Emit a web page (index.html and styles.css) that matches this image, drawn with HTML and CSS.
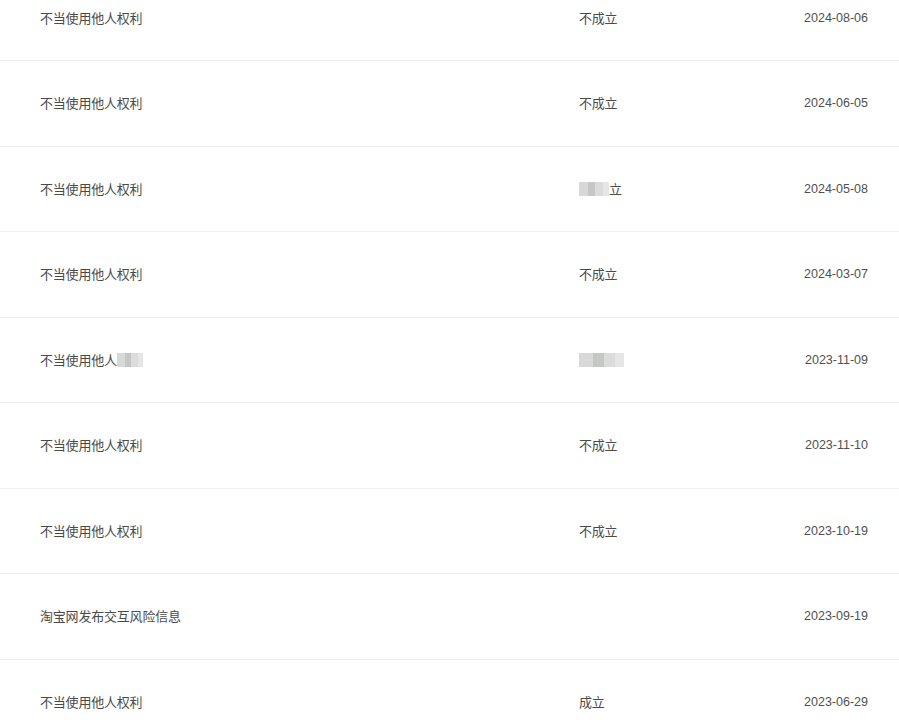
FILE: index.html
```html
<!DOCTYPE html>
<html lang="zh-CN">
<head>
<meta charset="utf-8">
<title>记录列表</title>
<link rel="stylesheet" href="styles.css">
</head>
<body>
<div class="list">
  <div class="row"><span class="type">不当使用他人权利</span><span class="result">不成立</span><span class="date">2024-08-06</span></div>
  <div class="row"><span class="type">不当使用他人权利</span><span class="result">不成立</span><span class="date">2024-06-05</span></div>
  <div class="row"><span class="type">不当使用他人权利</span><span class="result"><i class="mosaic m2"></i>立</span><span class="date">2024-05-08</span></div>
  <div class="row"><span class="type">不当使用他人权利</span><span class="result">不成立</span><span class="date">2024-03-07</span></div>
  <div class="row"><span class="type">不当使用他人<i class="mosaic m1"></i></span><span class="result"><i class="mosaic m3"></i></span><span class="date">2023-11-09</span></div>
  <div class="row"><span class="type">不当使用他人权利</span><span class="result">不成立</span><span class="date">2023-11-10</span></div>
  <div class="row"><span class="type">不当使用他人权利</span><span class="result">不成立</span><span class="date">2023-10-19</span></div>
  <div class="row"><span class="type">淘宝网发布交互风险信息</span><span class="result"></span><span class="date">2023-09-19</span></div>
  <div class="row"><span class="type">不当使用他人权利</span><span class="result">成立</span><span class="date">2023-06-29</span></div>
</div>
</body>
</html>
```
FILE: styles.css
```css
html, body {
  margin: 0;
  padding: 0;
  background: #ffffff;
}
body {
  overflow: hidden;
  font-family: "Noto Sans CJK SC", "Liberation Sans", sans-serif;
  font-size: 13px;
  color: #4a4a4a;
}
.list {
  margin-top: -24.5px;
}
.row {
  display: grid;
  grid-template-columns: 539px 1fr auto;
  align-items: center;
  height: 85.5px;
  box-sizing: border-box;
  padding: 0 31px 0 40px;
  border-bottom: 1px solid #f0f0f0;
}
.type, .result {
  display: flex;
  align-items: center;
  line-height: 18px;
  letter-spacing: -0.2px;
}
.date {
  font-family: "Liberation Sans", Arial, sans-serif;
  font-size: 12.5px;
  color: #505050;
  line-height: 18px;
}
.mosaic {
  display: inline-block;
  height: 14px;
  background: linear-gradient(90deg, #d8d8d8 0 30%, #c4c7c4 30% 55%, #dcdcdc 55% 80%, #e6e6e6 80% 100%);
}
.m1 { width: 26px; }
.m2 { width: 30px; }
.m3 { width: 45px; }
```
